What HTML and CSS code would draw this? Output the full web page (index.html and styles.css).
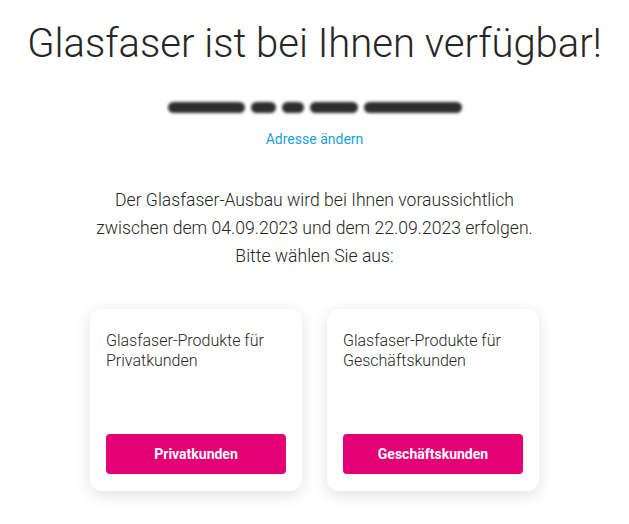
FILE: index.html
```html
<!DOCTYPE html>
<html lang="de">
<head>
  <meta charset="UTF-8">
  <meta name="viewport" content="width=device-width, initial-scale=1.0">
  <title>Glasfaser Verfügbarkeit</title>
  <link rel="stylesheet" href="styles.css">
</head>
<body>
  <div class="page">
    <h1 class="title">Glasfaser ist bei Ihnen verfügbar!</h1>

    <div class="address">
      <span class="blob" style="width: 77px"></span>
      <span class="blob" style="width: 25px"></span>
      <span class="blob" style="width: 22px"></span>
      <span class="blob" style="width: 48px"></span>
      <span class="blob" style="width: 98px"></span>
    </div>
    <a class="change-link" href="#">Adresse ändern</a>

    <p class="info">
      Der Glasfaser-Ausbau wird bei Ihnen voraussichtlich<br>
      zwischen dem 04.09.2023 und dem 22.09.2023 erfolgen.<br>
      Bitte wählen Sie aus:
    </p>

    <div class="cards">
      <div class="card">
        <p class="card-text">Glasfaser-Produkte für Privatkunden</p>
        <button class="card-button">Privatkunden</button>
      </div>
      <div class="card">
        <p class="card-text">Glasfaser-Produkte für Geschäftskunden</p>
        <button class="card-button">Geschäftskunden</button>
      </div>
    </div>
  </div>
</body>
</html>
```

FILE: styles.css
```css
body {
  margin: 0;
  background-color: #fff;
  color: #262626;
  font-family: Roboto, "Noto Sans", Arial, sans-serif;
}

.page {
  display: flex;
  flex-direction: column;
  align-items: center;
  padding-top: 20px;
}

.title {
  margin: 0;
  font-size: 40px;
  font-weight: 300;
  line-height: 48px;
}

.address {
  display: flex;
  align-items: center;
  gap: 6px;
  margin-top: 31px;
  height: 16px;
}

.blob {
  display: block;
  height: 11px;
  border-radius: 6px;
  background-color: #2e2e2e;
  filter: blur(1.5px);
}

.change-link {
  margin-top: 14px;
  color: #1a9fdc;
  font-size: 14px;
  line-height: 20px;
  text-decoration: none;
}

.info {
  margin: 37px 0 0;
  text-align: center;
  font-size: 17.6px;
  line-height: 28px;
  font-weight: 300;
  color: #262626;
}

.cards {
  display: flex;
  gap: 25px;
  margin-top: 39px;
  padding-bottom: 20px;
}

.card {
  display: flex;
  flex-direction: column;
  justify-content: space-between;
  width: 212px;
  height: 182px;
  box-sizing: border-box;
  padding: 22px 16px 17px;
  background-color: #fff;
  border-radius: 12px;
  box-shadow: 0 4px 16px rgba(0, 0, 0, 0.12);
}

.card-text {
  margin: 0;
  font-size: 16px;
  line-height: 20px;
  font-weight: 300;
  color: #262626;
}

.card-button {
  width: 180px;
  height: 40px;
  border: none;
  border-radius: 4px;
  background-color: #e20074;
  color: #fff;
  font-family: inherit;
  font-size: 14px;
  font-weight: 700;
  cursor: pointer;
}
```
